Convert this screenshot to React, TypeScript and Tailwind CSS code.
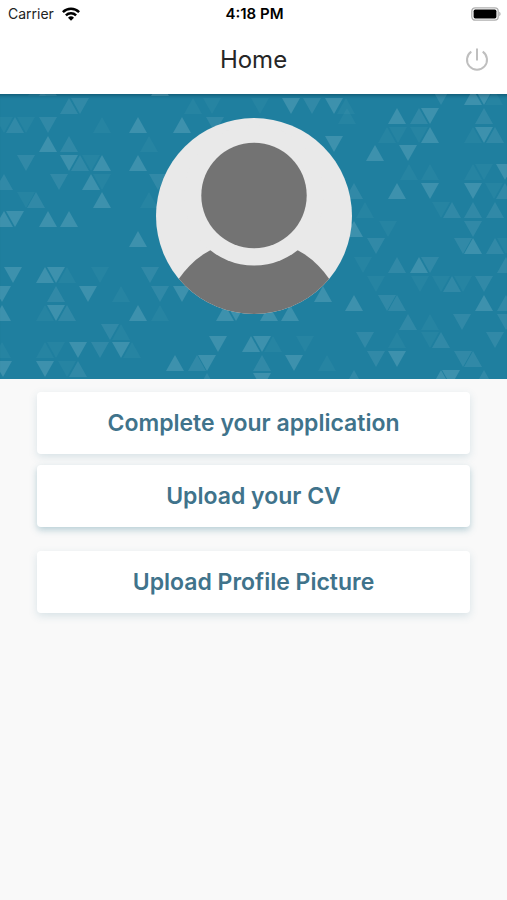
type Direction = "up" | "down";
type Triangle = [x: number, direction: Direction, strength: 1 | 2 | 3];
type Row = { y: number; items: Triangle[] };

const OPACITY = { 1: 0.04, 2: 0.09, 3: 0.15 };

// Banner pattern, x is the centre of each triangle and y the top of its row
const ROWS: Row[] = [
  // left side
  { y: -14, items: [[37, "up", 1], [48, "up", 2], [160, "up", 3]] },
  { y: 4, items: [[69, "up", 2], [80, "down", 2], [193, "up", 1], [212, "down", 1], [260, "down", 1], [291, "down", 3], [312, "down", 2], [334, "down", 3], [346, "up", 1]] },
  { y: 23, items: [[4, "down", 1], [15, "up", 2], [26, "down", 1], [48, "down", 2], [102, "up", 1], [138, "up", 3], [182, "up", 3], [215, "down", 2]] },
  { y: 42, items: [[48, "up", 3], [69, "up", 2], [149, "up", 1], [334, "down", 3]] },
  { y: 61, items: [[26, "down", 2], [69, "down", 3], [80, "up", 2], [91, "down", 1], [102, "up", 3], [138, "up", 3]] },
  { y: 80, items: [[4, "up", 2], [59, "down", 2], [91, "up", 3], [102, "down", 1], [158, "down", 2]] },
  { y: 98, items: [[26, "down", 1], [36, "up", 2], [102, "up", 3], [149, "up", 1]] },
  { y: 117, items: [[4, "up", 3], [15, "down", 3], [48, "up", 3], [69, "up", 3]] },
  { y: 137, items: [[138, "up", 3]] },
  { y: 173, items: [[13, "down", 3], [45, "up", 3], [56, "down", 3], [67, "up", 1], [100, "down", 1], [150, "down", 2]] },
  { y: 192, items: [[2, "down", 3], [56, "up", 2], [88, "down", 3], [121, "up", 1], [160, "down", 2], [182, "down", 3], [323, "up", 3]] },
  { y: 211, items: [[2, "up", 3], [45, "up", 1], [56, "down", 3], [67, "up", 2], [138, "up", 3], [160, "up", 1], [225, "up", 3], [236, "down", 3], [269, "up", 3], [290, "up", 3]] },
  { y: 230, items: [[110, "down", 2], [121, "up", 1]] },
  { y: 242, items: [[218, "down", 3], [251, "up", 3], [262, "down", 3], [273, "up", 1], [305, "down", 1]] },
  { y: 248, items: [[2, "up", 1], [45, "up", 1], [56, "down", 1], [78, "down", 3], [100, "down", 2], [121, "down", 3], [132, "up", 1]] },
  { y: 261, items: [[175, "up", 3], [197, "up", 2], [207, "down", 3], [262, "up", 2], [294, "down", 3], [327, "up", 1]] },
  { y: 267, items: [[3, "down", 3], [45, "down", 3], [67, "down", 1], [78, "up", 2]] },
  { y: 279, items: [[207, "up", 2], [262, "down", 3]] },
  // right side
  { y: -5, items: [[441, "down", 2], [473, "up", 3], [484, "down", 3], [494, "up", 1]] },
  { y: 14, items: [[347, "up", 1], [397, "up", 3], [419, "up", 2], [430, "down", 3], [484, "up", 2]] },
  { y: 33, items: [[387, "up", 1], [398, "down", 1], [419, "down", 1], [430, "up", 3], [473, "up", 1], [484, "down", 3], [495, "up", 2]] },
  { y: 51, items: [[375, "up", 3], [408, "down", 3]] },
  { y: 70, items: [[409, "up", 1], [430, "up", 1], [473, "up", 1], [484, "down", 1], [505, "down", 3]] },
  { y: 89, items: [[354, "up", 2], [397, "up", 3], [430, "down", 3], [473, "down", 3], [494, "down", 1], [505, "up", 2]] },
  { y: 108, items: [[365, "up", 1], [441, "down", 1], [452, "up", 2], [473, "up", 2], [495, "up", 2]] },
  { y: 127, items: [[354, "up", 3], [388, "down", 1], [473, "down", 2]] },
  { y: 144, items: [[376, "down", 2], [463, "down", 2], [473, "up", 3], [495, "up", 2], [506, "down", 1]] },
  { y: 163, items: [[363, "down", 1], [397, "up", 2], [419, "up", 3], [430, "down", 2], [506, "up", 2]] },
  { y: 182, items: [[376, "down", 1], [420, "down", 1], [441, "down", 1], [452, "up", 2], [463, "down", 1], [484, "down", 2]] },
  { y: 201, items: [[354, "up", 3], [387, "down", 2], [397, "up", 2], [484, "up", 3], [506, "up", 2]] },
  { y: 220, items: [[408, "up", 2], [430, "up", 1], [462, "down", 2], [506, "down", 2]] },
  { y: 238, items: [[365, "down", 2], [397, "up", 1], [430, "down", 1], [441, "up", 2], [495, "down", 2]] },
  { y: 257, items: [[376, "down", 2], [397, "down", 3], [463, "down", 2], [473, "up", 2]] },
  { y: 276, items: [[354, "up", 2], [441, "up", 3], [451, "down", 3], [484, "up", 2]] },
];

function trianglePoints(x: number, y: number, direction: Direction) {
  return direction === "up"
    ? `${x},${y} ${x + 9},${y + 16} ${x - 9},${y + 16}`
    : `${x - 9},${y} ${x + 9},${y} ${x},${y + 16}`;
}

function BannerPattern() {
  return (
    <svg
      className="absolute inset-0 w-full h-full"
      viewBox="0 0 507 285"
      preserveAspectRatio="xMidYMid slice"
      aria-hidden="true"
    >
      {ROWS.map((row) =>
        row.items.map(([x, direction, strength]) => (
          <polygon
            key={`${row.y}-${x}-${direction}`}
            points={trianglePoints(x, row.y, direction)}
            fill="#eaf6ff"
            opacity={OPACITY[strength]}
          />
        ))
      )}
    </svg>
  );
}

function WifiIcon() {
  return (
    <svg width="18" height="14" viewBox="0 0 18 14" fill="none" stroke="#000" strokeWidth="2.5" aria-hidden="true">
      <path d="M0.9 5.1a11.6 11.6 0 0 1 16.2 0" />
      <path d="M3.9 8.3a7.3 7.3 0 0 1 10.2 0" />
      <path d="M9 13.8 6 10.8a4.3 4.3 0 0 1 6 0z" fill="#000" stroke="none" />
    </svg>
  );
}

function BatteryIcon() {
  return (
    <svg width="30" height="14" viewBox="0 0 30 14" aria-hidden="true">
      <rect x="0.8" y="0.8" width="26.4" height="12.4" rx="3.4" fill="#fff" stroke="#b0b0b0" strokeWidth="1.3" />
      <rect x="2.6" y="2.6" width="22.8" height="8.8" rx="1.6" fill="#000" />
      <path d="M28.3 4.8c1.6.6 1.6 3.8 0 4.4z" fill="#a6a6a6" />
    </svg>
  );
}

function PowerIcon() {
  return (
    <svg width="24" height="24" viewBox="0 0 24 24" fill="none" stroke="#bfbfbf" strokeWidth="2" aria-hidden="true">
      <path d="M12 0.5v12" />
      <path d="M6.3 3.6a10 10 0 1 0 11.4 0" />
    </svg>
  );
}

function Avatar() {
  return (
    <svg
      className="relative w-49 h-49"
      viewBox="0 0 196 196"
      role="img"
      aria-label="Profile picture"
    >
      <defs>
        <clipPath id="avatar-clip">
          <circle cx="98" cy="98" r="98" />
        </clipPath>
      </defs>
      <g clipPath="url(#avatar-clip)">
        <rect width="196" height="196" fill="#e9e9e9" />
        <circle cx="98" cy="212" r="91" fill="#737373" />
        <circle cx="98" cy="77.5" r="70" fill="#e9e9e9" />
        <circle cx="98" cy="77.5" r="52.7" fill="#737373" />
      </g>
    </svg>
  );
}

const CARD = "w-full rounded-sm bg-white py-4 text-center text-[23px] leading-[30px] font-semibold text-[#40738b]";

export default function App() {
  return (
    <div className="min-h-screen bg-[#f9f9f9] font-['Inter','Liberation_Sans',sans-serif]">
      <header className="bg-white">
        <div className="grid grid-cols-3 items-center h-7 pl-2 pr-1.5 text-[14px] leading-5 text-black">
          <div className="flex items-center gap-2 text-[#222]">
            Carrier
            <WifiIcon />
          </div>
          <div className="text-center font-semibold text-[15px]">4:18 PM</div>
          <div className="flex justify-end">
            <BatteryIcon />
          </div>
        </div>
        <div className="grid grid-cols-3 items-center h-[66px] px-[18px] pb-0.5">
          <h1 className="col-start-2 text-center text-[24px] leading-8 text-[#262626]">Home</h1>
          <button type="button" aria-label="Log out" className="justify-self-end">
            <PowerIcon />
          </button>
        </div>
      </header>

      <section className="relative flex justify-center overflow-hidden bg-[#1f7f9f] pt-6 pb-[65px] shadow-[inset_0_5px_4px_-4px_rgba(0,50,70,0.6)]">
        <BannerPattern />
        <Avatar />
      </section>

      <main className="flex flex-col px-[37px] pt-[13px] pb-8">
        <button type="button" className={`${CARD} shadow-[0_3px_9px_rgba(64,130,150,0.18)]`}>
          Complete your application
        </button>
        <button type="button" className={`${CARD} mt-[11px] shadow-[0_3px_7px_rgba(64,130,150,0.35)]`}>
          Upload your CV
        </button>
        <button type="button" className={`${CARD} mt-6 shadow-[0_3px_9px_rgba(64,130,150,0.18)]`}>
          Upload Profile Picture
        </button>
      </main>
    </div>
  );
}
